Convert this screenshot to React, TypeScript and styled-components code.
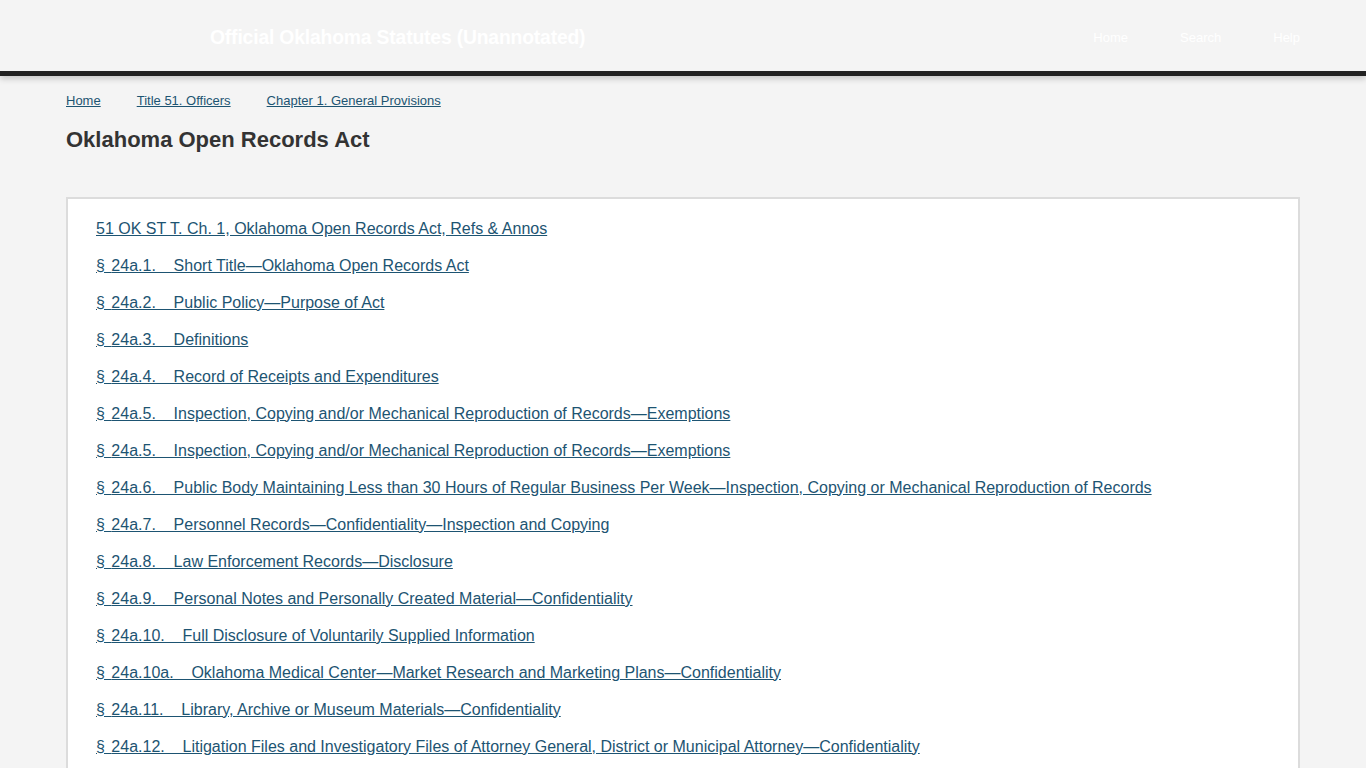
import React from "react";
import styled, { createGlobalStyle } from "styled-components";

const Global = createGlobalStyle`
  html { scrollbar-width: none; }
  html::-webkit-scrollbar, body::-webkit-scrollbar { display: none; }
  body {
    margin: 0;
    background: #f4f4f4;
    font-family: "Liberation Sans", Arial, sans-serif;
    color: #333;
  }
`;

const Header = styled.header`
  background: #f4f4f4;
  border-bottom: 5px solid #222;
  box-shadow: 0 3px 6px rgba(0, 0, 0, 0.18);
  height: 71px;
  display: flex;
  align-items: center;
  justify-content: space-between;
  padding: 0 66px 0 210px;
`;

const SiteTitle = styled.div`
  color: #fff;
  font-weight: bold;
  font-size: 19.3px;
  letter-spacing: -0.15px;
  padding-top: 4px;
`;

const Nav = styled.nav`
  display: flex;
  gap: 52px;
  padding-top: 4px;
`;

const NavLink = styled.a`
  color: #fff;
  font-size: 13px;
  text-decoration: none;
`;

const Main = styled.main`
  max-width: 1234px;
  margin: 0 auto;
  padding: 0 66px;
`;

const Breadcrumbs = styled.div`
  display: flex;
  gap: 36px;
  padding-top: 17px;
  font-size: 13px;
  line-height: 15px;
`;

const Crumb = styled.a`
  color: #1d5472;
  text-decoration: underline;
`;

const Heading = styled.h1`
  margin: 19px 0 0;
  font-size: 22px;
  line-height: 26px;
  font-weight: bold;
  color: #333;
`;

const Card = styled.section`
  margin-top: 44px;
  background: #fff;
  border: 2px solid #dcdcdc;
  padding: 11px 28px 20px;
`;

const Row = styled.div`
  height: 37px;
  display: flex;
  align-items: center;
  font-size: 16px;
`;

const ItemLink = styled.a`
  color: #1d5472;
  text-decoration: underline;
  white-space: pre;
`;

const Sect = styled.span`
  letter-spacing: 1px;
`;

const items: [string, string][] = [
  ["", "51 OK ST T. Ch. 1, Oklahoma Open Records Act, Refs & Annos"],
  ["24a.1.", "Short Title—Oklahoma Open Records Act"],
  ["24a.2.", "Public Policy—Purpose of Act"],
  ["24a.3.", "Definitions"],
  ["24a.4.", "Record of Receipts and Expenditures"],
  ["24a.5.", "Inspection, Copying and/or Mechanical Reproduction of Records—Exemptions"],
  ["24a.5.", "Inspection, Copying and/or Mechanical Reproduction of Records—Exemptions"],
  ["24a.6.", "Public Body Maintaining Less than 30 Hours of Regular Business Per Week—Inspection, Copying or Mechanical Reproduction of Records"],
  ["24a.7.", "Personnel Records—Confidentiality—Inspection and Copying"],
  ["24a.8.", "Law Enforcement Records—Disclosure"],
  ["24a.9.", "Personal Notes and Personally Created Material—Confidentiality"],
  ["24a.10.", "Full Disclosure of Voluntarily Supplied Information"],
  ["24a.10a.", "Oklahoma Medical Center—Market Research and Marketing Plans—Confidentiality"],
  ["24a.11.", "Library, Archive or Museum Materials—Confidentiality"],
  ["24a.12.", "Litigation Files and Investigatory Files of Attorney General, District or Municipal Attorney—Confidentiality"],
  ["24a.13.", "Federal Confidentiality Requirements—Applicability"],
  ["24a.14.", "Circumventing Act by Granting Exclusive Rights Prohibited"],
  ["24a.15.", "Records of Political Subdivisions' Utility Systems—Confidentiality"],
];

export default function App() {
  return (
    <>
      <Global />
      <Header>
        <SiteTitle>Official Oklahoma Statutes (Unannotated)</SiteTitle>
        <Nav>
          <NavLink href="#">Home</NavLink>
          <NavLink href="#">Search</NavLink>
          <NavLink href="#">Help</NavLink>
        </Nav>
      </Header>
      <Main>
        <Breadcrumbs>
          <Crumb href="#">Home</Crumb>
          <Crumb href="#">Title 51. Officers</Crumb>
          <Crumb href="#">Chapter 1. General Provisions</Crumb>
        </Breadcrumbs>
        <Heading>Oklahoma Open Records Act</Heading>
        <Card>
          {items.map(([num, title], i) => (
            <Row key={i}>
              <ItemLink href="#">
                {num ? (
                  <>
                    <Sect>§ </Sect>
                    {`${num}    ${title}`}
                  </>
                ) : (
                  title
                )}
              </ItemLink>
            </Row>
          ))}
        </Card>
      </Main>
    </>
  );
}
